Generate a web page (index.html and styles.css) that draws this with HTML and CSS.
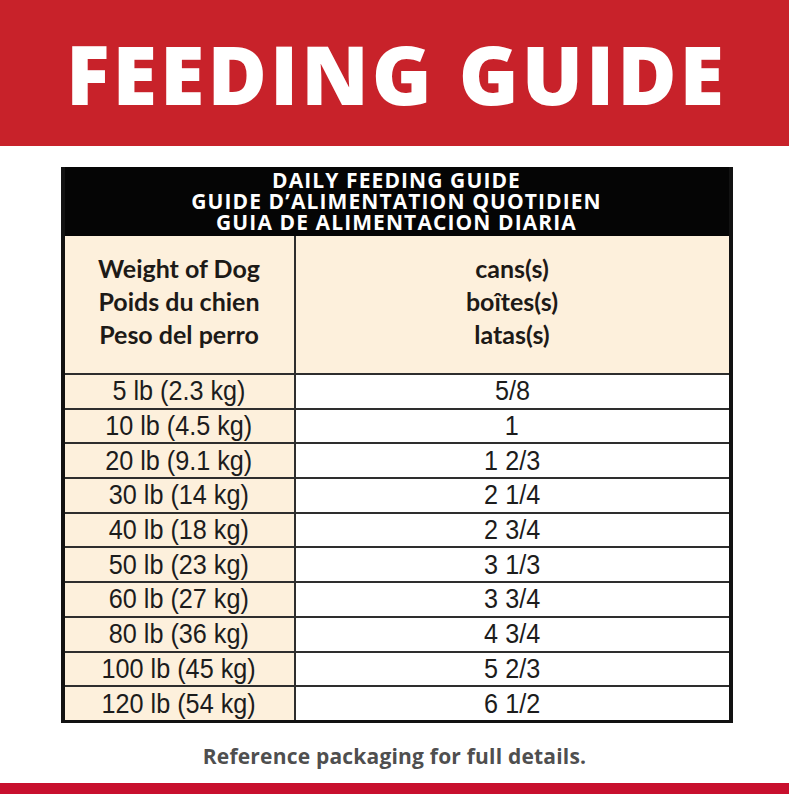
FILE: index.html
```html
<!DOCTYPE html>
<html>
<head>
<meta charset="utf-8">
<link rel="stylesheet" href="styles.css">
</head>
<body>
<header class="banner"><h1 class="title">FEEDING GUIDE</h1></header>
<main class="wrap">
  <div class="guide">
    <div class="guide-head">DAILY FEEDING GUIDE<br>GUIDE D’ALIMENTATION QUOTIDIEN<br>GUIA DE ALIMENTACION DIARIA</div>
    <div class="row row-head">
      <div class="cell cell-weight"><span>Weight of Dog</span><span>Poids du chien</span><span>Peso del perro</span></div>
      <div class="cell cell-amount"><span>cans(s)</span><span>boîtes(s)</span><span>latas(s)</span></div>
    </div>
    <div class="row"><div class="cell cell-weight"><span class="num">5 lb (2.3 kg)</span></div><div class="cell cell-amount"><span class="num">5/8</span></div></div>
    <div class="row"><div class="cell cell-weight"><span class="num">10 lb (4.5 kg)</span></div><div class="cell cell-amount"><span class="num">1</span></div></div>
    <div class="row"><div class="cell cell-weight"><span class="num">20 lb (9.1 kg)</span></div><div class="cell cell-amount"><span class="num">1 2/3</span></div></div>
    <div class="row"><div class="cell cell-weight"><span class="num">30 lb (14 kg)</span></div><div class="cell cell-amount"><span class="num">2 1/4</span></div></div>
    <div class="row"><div class="cell cell-weight"><span class="num">40 lb (18 kg)</span></div><div class="cell cell-amount"><span class="num">2 3/4</span></div></div>
    <div class="row"><div class="cell cell-weight"><span class="num">50 lb (23 kg)</span></div><div class="cell cell-amount"><span class="num">3 1/3</span></div></div>
    <div class="row"><div class="cell cell-weight"><span class="num">60 lb (27 kg)</span></div><div class="cell cell-amount"><span class="num">3 3/4</span></div></div>
    <div class="row"><div class="cell cell-weight"><span class="num">80 lb (36 kg)</span></div><div class="cell cell-amount"><span class="num">4 3/4</span></div></div>
    <div class="row"><div class="cell cell-weight"><span class="num">100 lb (45 kg)</span></div><div class="cell cell-amount"><span class="num">5 2/3</span></div></div>
    <div class="row"><div class="cell cell-weight"><span class="num">120 lb (54 kg)</span></div><div class="cell cell-amount"><span class="num">6 1/2</span></div></div>
  </div>
  <p class="note">Reference packaging for full details.</p>
</main>
<footer class="bottom-bar"></footer>
</body>
</html>
```
FILE: styles.css
```css
html, body {
  margin: 0;
  padding: 0;
  background: #fff;
}
body {
  width: 789px;
  height: 794px;
  overflow: hidden;
  display: flex;
  flex-direction: column;
  font-family: "Liberation Sans", Arial, sans-serif;
}
.banner {
  height: 146px;
  flex: none;
  background: #c8222a;
  display: flex;
  align-items: center;
  justify-content: center;
}
.title {
  margin: 0;
  color: #fff;
  font-family: "Open Sans", sans-serif;
  font-weight: 800;
  font-size: 81px;
  letter-spacing: 3px;
  line-height: 1;
  padding-left: 4px;
}
.wrap {
  flex: 1;
  display: flex;
  flex-direction: column;
  align-items: center;
  padding-top: 21px;
}
.guide {
  width: 664px;
  border: 4px solid #121212;
  border-top: none;
  border-bottom-width: 3px;
  margin-left: 4px;
}
.guide-head {
  background: #050505;
  color: #fff;
  font-family: "Open Sans", sans-serif;
  font-weight: 700;
  font-size: 21px;
  line-height: 21px;
  text-align: center;
  padding: 3px 0 3px;
  letter-spacing: 1.1px;
}
.row {
  display: grid;
  grid-template-columns: 231px 1fr;
  border-top: 2px solid #2e2e2e;
  height: 32.7px;
}
.row-head {
  height: 137px;
  border-top: none;
}
.cell {
  display: flex;
  align-items: center;
  justify-content: center;
  font-family: "Liberation Sans", Arial, sans-serif;
  font-size: 28px;
  color: #1c1c1c;
  overflow: hidden;
}
.num {
  display: inline-block;
  transform: scaleX(0.9);
  white-space: nowrap;
  line-height: 1;
}
.cell-weight {
  background: #fdf0dc;
  border-right: 2px solid #2e2e2e;
}
.cell-amount {
  background: #fff;
}
.row-head .cell {
  flex-direction: column;
  background: #fdf0dc;
  font-family: "Lato", sans-serif;
  font-weight: 700;
  font-size: 25px;
  line-height: 33px;
  color: #1d1a17;
  padding-bottom: 6px;
}
.note {
  margin: 19px 0 0;
  font-family: "Open Sans", sans-serif;
  font-weight: 700;
  font-size: 21px;
  color: #4f4f4f;
  letter-spacing: 0.2px;
}
.bottom-bar {
  height: 11px;
  flex: none;
  background: #c8102e;
}
```
